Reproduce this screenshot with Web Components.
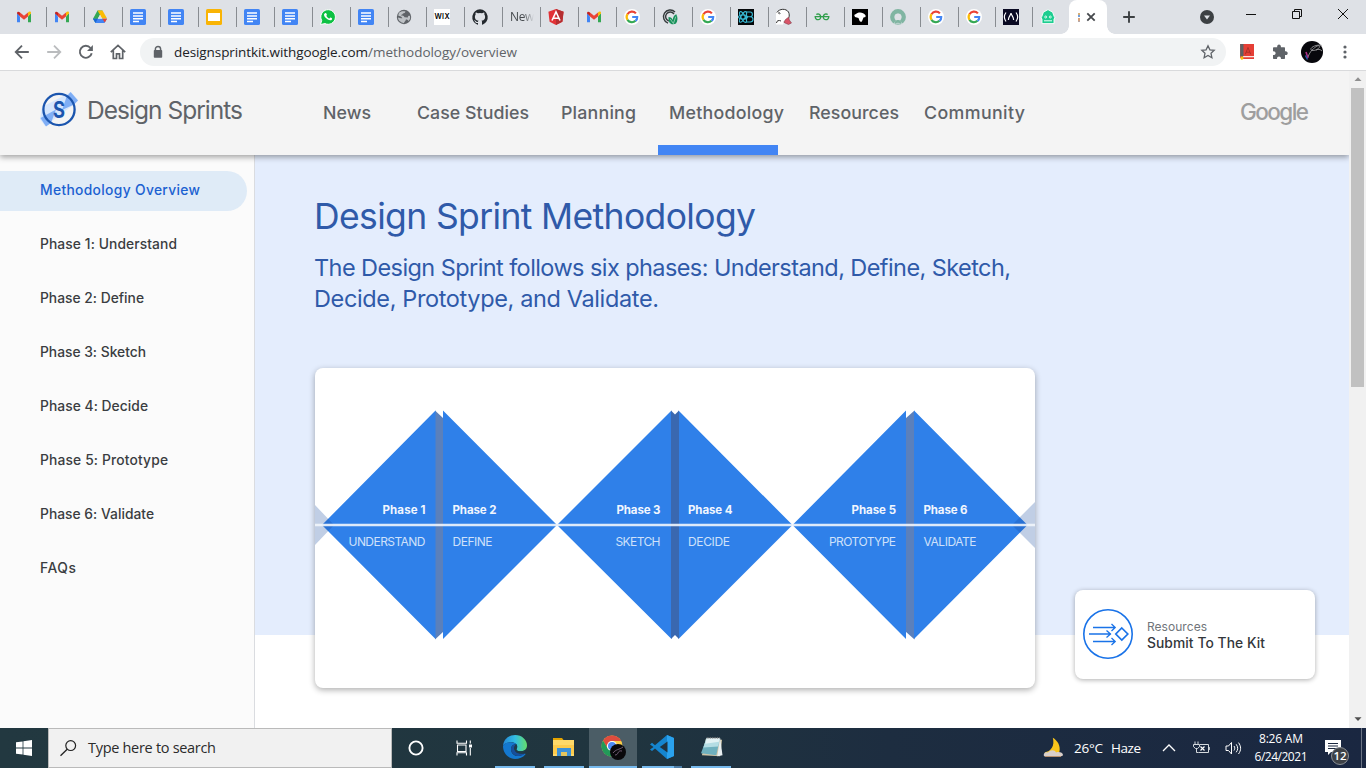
<!DOCTYPE html>
<html lang="en">
<head>
<meta charset="utf-8">
<title>Design Sprint Methodology</title>
<style>
html,body{margin:0;padding:0;height:100%;overflow:hidden;background:#fff}
body{font-family:Inter,"Open Sans",sans-serif}
</style>
</head>
<body>
<desktop-screen></desktop-screen>
<script>
const define = (name, html, setup) => {
  const t = document.createElement('template');
  customElements.define(name, class extends HTMLElement {
    connectedCallback() {
      if (this.shadowRoot) return;
      const root = this.attachShadow({mode: 'open'});
      t.innerHTML = typeof html === 'function' ? html(this) : html;
      root.appendChild(document.importNode(t.content, true));
      if (setup) setup(this);
    }
  });
};

/* Text set to an exact measure by adjusting its tracking */
define('fit-text', '<style>:host{display:inline-block;white-space:nowrap;flex:none}</style><slot></slot>', el => {
  const w = +el.getAttribute('w');
  const n = el.textContent.length - 1;
  const now = el.getBoundingClientRect().width;
  if (w && n > 0) {
    el.style.letterSpacing = ((w - now) / n).toFixed(3) + 'px';
    el.style.width = w + 'px';
  }
});

const docs = '<rect width="16" height="16" rx="1.6" fill="#4285f4"/><path d="M3 4h10M3 6.9h10M3 9.7h10M3 12.4h6" stroke="#fff" stroke-width="1.5"/>';
const icons = {
  gmail: '<path d="M1 4v9.2h3V7.6z" fill="#4285f4"/><path d="M12 7.6v5.6h3V4z" fill="#34a853"/><path d="M1 4.6L4 7.3V3.6C2.800 2 1 2.600 1 4z" fill="#c5221f"/><path d="M12 3.600v3.700l3-2.700V4c0-1.600-1.800-2-3-.4z" fill="#fbbc04"/><path d="M4 3.600L8 6.700l4-3.100v4L8 10.700 4 7.600z" fill="#ea4335"/>',
  drive: '<path d="M5.500 1.500h5L8 5.800 3.500 14 1 9.800z" fill="#34a853"/><path d="M5.500 1.500h5l4.500 8h-5z" fill="#fbbc04"/><path d="M1 9.800h14l-2.500 4.300h-9z" fill="#4285f4"/><path d="M8 5.800l2.200 4H5.800z" fill="#dee1e6"/><path d="M10.300 9.800H15l-2.200 3.800z" fill="#ea4335"/><path d="M1 9.800h4.800l-2.300 4z" fill="#1967d2"/>',
  docs,
  slides: '<rect width="16" height="16" rx="1.600" fill="#f9b405"/><rect x="2" y="4" width="12" height="8" fill="#fff"/>',
  whatsapp: '<path d="M.5 15.500l1.200-4A7.300 7.300 0 1 1 5 14.600z" fill="#0dc143" stroke="#fff"/><path d="M5 4.200c1-.8 1.500.3 1.900 1.500.1.500-.8 1-.5 1.400 1 1.700 1.900 2.100 2.700 2.400.6.200.9-1.200 1.500-1 1.800.8 1.700 1 1.300 1.900-.8 1.300-2.400 1-4.100.1C5.600 9.200 4 7.200 4 5.800c0-.7.500-1.300 1-1.600z" fill="#fff"/>',
  globe: '<circle cx="8" cy="8" r="7.200" fill="#5f6368"/><path d="M3 3.800c1.500-1.800 4.700-2 6.500-1.200-.2 1.400-1.500 1.700-2.500 2-.3 1.200-2 1-2 2 1.500 0 3 0 3.500 1.600l3.300.2c0-1.400 1-2 2.200-1.400.5 2-.3 4-1.500 5.100-.3-1-1-1.600-2.600-1.600-.2 1.400-1.400 2-2 3.700C4.800 13.700 2 11.500 2 8.600l3 .6c.8 0 1.300.5 1.300-.3C5.300 7 3.500 7 2.200 6.400z" fill="#dee1e6" opacity=".75"/>',
  wix: '<rect width="16" height="16" fill="#fff"/><text x=".4" y="10.400" font-family="Inter" font-weight="600" font-size="7.200" textLength="15.200">WIX</text>',
  github: '<path fill="#24292e" d="M8 .2a8 8 0 0 0-2.500 15.500c.4.100.5-.2.500-.4v-1.400c-2.200.5-2.700-1-2.700-1-.4-.9-.9-1.200-.9-1.200-.7-.5.100-.5.100-.5.800.1 1.200.8 1.200.8.700 1.300 1.900.9 2.300.7.100-.5.300-.9.500-1.100-1.800-.2-3.600-.9-3.600-3.900 0-.9.300-1.600.8-2.100-.1-.2-.4-1 .1-2.100 0 0 .7-.2 2.200.8a7.600 7.600 0 0 1 4 0c1.500-1 2.200-.8 2.200-.8.400 1.100.2 1.900.1 2.100.5.600.8 1.300.8 2.100 0 3.100-1.900 3.700-3.600 3.900.3.300.5.800.5 1.500v2.200c0 .2.100.5.500.4A8 8 0 0 0 8 .2z"/>',
  angular: '<path d="M8 0l7.600 2.700-1.200 10L8 16l-6.400-3.300L.4 2.700z" fill="#e23237"/><path d="M8 0l7.600 2.700-1.200 10L8 16z" fill="#b52e31"/><path d="M4 11.500L8 3l4 8.500M5.600 9.200h4.800" fill="none" stroke="#fff" stroke-width="1.600"/>',
  google: '<circle cx="8" cy="8" r="8" fill="#fff"/><g fill="none" stroke-width="2.200"><path d="M3.500 5.200A5.200 5.200 0 0 1 11.900 4.400" stroke="#ea4335"/><path d="M3.500 5.200a5.200 5.200 0 0 0 0 5.600" stroke="#fbbc05"/><path d="M3.500 10.800a5.200 5.200 0 0 0 8 1" stroke="#34a853"/><path d="M8.200 8h5c.1 1.800-.7 3.100-1.700 3.900" stroke="#4285f4"/></g>',
  leaf: '<g fill="none" stroke="#353b3d" stroke-width="1.400"><path d="M13 2.900A6.800 6.800 0 1 0 6 14.200"/><path d="M12 5A4.600 4.600 0 1 0 6.800 12"/></g><path d="M6.500 8c2.200 0 3.600 1.200 4.200 3 .3-3 1.600-5 3.600-5.800 1.700 3.200 1.500 6.700-.3 9.300-2.700 1.600-6 .8-7-2-.4-1.300-.6-3.100-.5-4.500z" fill="#16905a"/><path d="M8.200 10l3.200 4.500M13.800 7.500l-2.400 7" stroke="#b7e0ca" stroke-width=".7"/>',
  reactb: '<rect width="16" height="16" fill="#05080a"/><g fill="none" stroke="#39b9d4" stroke-width="1.100"><path d="M8.500 3h3.800c2.800.3 2.800 4.500 0 4.700 3.600 0 3.600 5.300 0 5.300H8.500zM8.500 7.700h4"/><ellipse cx="5" cy="8" rx="4.500" ry="2"/><ellipse cx="5" cy="8" rx="6" ry="2.100" transform="rotate(60 5 8)"/><ellipse cx="5" cy="8" rx="6" ry="2.100" transform="rotate(-60 5 8)"/></g>',
  duck: '<path d="M0 2.500v13h7l2-5z" fill="#fff"/><path d="M2 2C5-.5 10 0 12 2.500c2 2 1.500 5 1 6.500l-3 2-6 2C0 9 0 5 2 2z" fill="#fff"/><path d="M.8 3.500C3.500-.5 10-.8 12.500 3c1 2 .8 4 .5 5.500M2 4.500c1.500-2 3 .5 1.500.5M5 12c-2-1-4.500-.5-4.500 2" fill="none" stroke="#333" stroke-width="1"/><path d="M9.500 10.500l3.300-2.500.5 3 2.200 3-3 1.500C11 15 9 14 7.800 13.200z" fill="#d95468" stroke="#6e3540" stroke-width=".5"/>',
  gfg: '<g fill="none" stroke="#2f9e4b" stroke-width="1.300"><path d="M2.300 5.500C4 4.400 6.200 5.100 6.700 7.500c.5 4-5.500 4.500-5.500.2h13.600c0 4.300-6 3.800-5.500-.2.500-2.400 2.700-3.100 4.400-2"/></g>',
  black: '<rect width="16" height="16" fill="#000"/><path d="M2.200 6L5.500 4c3-1 6-.3 8 2.300v1.700l-2 .5-1.600 4c-1 .6-2 .3-2.400-.7L6.500 9 3 8z" fill="#fff"/>',
  ring: '<circle cx="8" cy="8" r="5.700" fill="none" stroke="#80b5a2" stroke-width="4.400"/><circle cx="8" cy="8" r="3.300" fill="#dee1e6"/><path d="M6 11h4l3 4.500H3z" fill="#dee1e6" opacity=".6"/><path d="M5 12.500l2-1.500h2l2 1.500v2.300l-2.500-1H7l-2 1z" fill="#80b5a2"/>',
  fcc: '<rect width="16" height="16" fill="#0a0a23"/><g fill="none" stroke="#fff" stroke-width="1.200"><path d="M3 3.500c-2.200 3-2.200 6 0 9M13 3.500c2.200 3 2.200 6 0 9M5.500 11C5 8 7.500 7 8 4c.5 3 3 4 2.500 7"/></g>',
  mint: '<path d="M8 .6l4.600 2.600 1.600 4.300.9 1.500-1.100.8v4.800H2V9.800L.9 9l.9-1.500 1.600-4.300z" fill="#1dcd90" stroke="#fff" stroke-width=".9"/><circle cx="5.700" cy="8" r="1" fill="none" stroke="#fff" stroke-width=".8"/><circle cx="10.300" cy="8" r="1" fill="none" stroke="#fff" stroke-width=".8"/><path d="M4 11.800h8" stroke="#e9fff7"/>',
  back: '<path d="M14.800 8H2M8 1.700L1.700 8 8 14.300" fill="none" stroke="#5f6368" stroke-width="1.800"/>',
  forward: '<path d="M1.200 8H14M8 1.700L14.300 8 8 14.300" fill="none" stroke="#babcbe" stroke-width="1.800"/>',
  reload: '<path d="M13.700 9.200A6 6 0 1 1 12.500 4" fill="none" stroke="#5f6368" stroke-width="1.900"/><path d="M14.900 1v6H9z" fill="#5f6368"/>',
  home: '<path d="M.8 8.200L8 1.400l7.200 6.800M3.300 6.500v8h3.200V9.800h3v4.700h3.200v-8" fill="none" stroke="#5f6368" stroke-width="1.700"/>',
  lock: '<path d="M5.400 6.500V5a2.600 2.600 0 0 1 5.200 0v1.500" fill="none" stroke="#5f6368" stroke-width="1.500"/><rect x="3.800" y="6" width="8.400" height="7.800" rx=".8" fill="#5f6368"/>',
  star: '<path d="M8 1.800l1.900 4 4.300.5-3.200 3 .9 4.400L8 11.500l-3.900 2.200.9-4.400-3.200-3 4.300-.5z" fill="none" stroke="#5f6368" stroke-width="1.300"/>',
  book: '<path d="M1.200 0H15v12H4v1h11v2H3l-1.800-1z" fill="#e53e35"/><path d="M1.200 0h3.300v12.500H1.200z" fill="#5d6063"/><path d="M4 12.800h10.800" stroke="#f7d8d5"/><path d="M6.300 10.300L9 3.500l2.700 6.800M7.300 8.200h3.500" fill="none" stroke="#a93129" stroke-width="1"/><path d="M2 12.600h2l.5 2-1.500 1.400-1.500-1z" fill="#f4c20d"/>',
  puzzle: '<path d="M1 4.300c0-.7.500-1 1-1h3.200C4.900 1.400 6 .6 7 .6s2.200.8 1.900 2.700H12c.7 0 1 .4 1 1v3c2-.3 2.700.9 2.700 1.900S15 11.400 13 11v3.100c0 .6-.4 1-1 1H9c.1-1.800-.8-2.600-2-2.600s-2.100.8-2 2.600H2c-.6 0-1-.4-1-1v-3c1.800.1 2.600-.8 2.600-1.900S2.800 7.200 1 7.300z" fill="#5f6368"/>',
  avatar: '<circle cx="11" cy="11" r="11" fill="#07070c"/><g fill="none"><path d="M7 16c2-6 6-9 9-11 3-1 4 1 0 3.500-3 1.500-7 1.500-6-1 2-3 8-4 11-3" stroke="#a9a9ac" stroke-width=".8"/><path d="M5 11l1 3 1 3" stroke="#ad2e86" stroke-width="1.600"/><path d="M4.500 14.500l2 4" stroke="#2a56a4" stroke-width="1.500"/><path d="M15 9c2-1 4-1 6 1" stroke="#c5c5c5" stroke-width=".7"/></g>',
  dots: '<g fill="#5f6368"><circle cx="8" cy="3" r="1.600"/><circle cx="8" cy="8" r="1.600"/><circle cx="8" cy="13" r="1.600"/></g>',
  close: '<path d="M4.300 4.300l7.400 7.400M11.700 4.300l-7.400 7.400" stroke="#45484c" stroke-width="1.800"/>',
  plus: '<path d="M8 2.200v11.600M2.200 8h11.600" stroke="#3c4043" stroke-width="1.900"/>',
  chev: '<circle cx="8" cy="8" r="7" fill="#3c4043"/><path d="M5 6.400h6L8 10.500z" fill="#dee1e6"/>',
  min: '<path d="M3 8.500h10" stroke="#111"/>',
  restore: '<path d="M3.500 5.500h7v7h-7zM5.500 5.500v-2h7v7h-2" fill="none" stroke="#111"/>',
  winclose: '<path d="M3 3l10 10M13 3L3 13" stroke="#111" stroke-width="1"/>',
  up: '<path d="M4.500 10L8 6.300l3.500 3.700z" fill="#8f8f8f"/>',
  down: '<path d="M4.500 6.300L8 10l3.500-3.700z" fill="#505050"/>',
  windows: '<path d="M0 2.300l6.600-.9v6.200H0zM7.400 1.300L16 .1v7.500H7.400zM0 8.400h6.600v6.200L0 13.700zM7.400 8.400H16v7.500l-8.600-1.200z" fill="#fff"/>',
  search: '<circle cx="10.700" cy="5.600" r="4.900" fill="none" stroke="#222" stroke-width="1.200"/><path d="M7.200 9.200L.5 15.800" stroke="#222" stroke-width="1.300"/>',
  cortana: '<circle cx="8" cy="8" r="6.600" fill="none" stroke="#fff" stroke-width="1.900"/>',
  task: '<path d="M1 .5v2.700h9.500V.5M1.500 5h8.500v6.500H1.500zM1 15.500v-2.700h9.500v2.700" fill="none" stroke="#fff" stroke-width="1.100"/><path d="M14.300.5v3M14.300 8v7.500" stroke="#fff" stroke-width="1.100"/><path d="M13 4.500h3v3h-3z" fill="#fff"/>',
  edge: '<defs><linearGradient id="e"><stop stop-color="#2487d7"/><stop offset=".5" stop-color="#32bde4"/><stop offset="1" stop-color="#64dc6a"/></linearGradient></defs><path d="M0 11C.5 4.500 5.500 0 12.200 0 19 0 24 5 24 10.300c0 4-3 6-6 6-3.400 0-4.800-1.100-4.600-2.100.3-.8 1-1 .9-2.700C14.300 9 11.500 7.200 8 7.200c-3.700 0-7 1.500-8 3.800z" fill="url(#e)"/><path d="M0 11c1-2.500 4.500-3.800 8-3.800 2.500 0 4.500.8 5.500 2-3.500-.4-5.500 2-5.500 5 0 5 5 8 9.500 6.500 2-.8 3.300-1.500 4.200-1.900.8-.3 1 .3.600.8C20 22.600 16.200 24 12 24 5 24-.2 17.500 0 11z" fill="#1478cf"/><path d="M8 14.200c0-3 2-5.400 5.500-5-1.500 1-2.500 2.500-2.200 4.500.7 4 5.700 5.300 10.400 5.100-4.700 4.500-13.700 1.900-13.700-4.600z" fill="#164f9c"/><path d="M11.300 13.700c-.2-2 .8-3.500 2-4.500 1 1.500 1 3.500.1 5 .2 2 4.600 3 8.300 1.100.8-.3 1 .6.300 1.400-4 3.500-10 2-10.700-3z" fill="#203b49"/>',
  folder: '<path d="M1 3h9l1.500 2H1z" fill="#e5a400"/><path d="M1 5h21v16H1z" fill="#ffd969"/><path d="M1 10h21v9H1z" fill="#fdcb4c"/><path d="M5 21v-8h14v8h-4v-4H9v4z" fill="#3c91d8"/><path d="M9 17h6v4H9z" fill="#e4c55d"/>',
  chrome: '<circle cx="11" cy="11" r="10.500" fill="#f9cc45"/><path d="M11 .5A10.500 10.500 0 0 0 2 5.700L6.500 13 11 6h9.300A10.500 10.500 0 0 0 11 .5z" fill="#df4c3e"/><path d="M2 5.500A10.500 10.500 0 0 0 11 21.500l4.500-7-4 1.500-5-3z" fill="#229a59"/><circle cx="11" cy="11" r="5.100" fill="#fff"/><circle cx="11" cy="11" r="4" fill="#4c8bf5"/><circle cx="17" cy="17" r="8" fill="#09080b"/><path d="M12 18c3-4 6-3 10-6M14 20c4 0 2-5 7-4" fill="none" stroke="#8d7391" stroke-width=".8"/>',
  vscode: '<path d="M17 0l7 3v18l-7 3L5 13.500 2 16 0 14.500 3.500 12 0 9.500 2 7.800 5 10.300z" fill="#1585cf"/><path d="M17 0l7 3v18l-7 3V0z" fill="#2aa2ee"/><path d="M17.500 6.500v11L9.800 12z" fill="#20323e"/>',
  notepad: '<path d="M6 3l17 1-2 17L2 20z" fill="#d0c6a9"/><path d="M7 2h14l-4 18L1 18z" fill="#6fb0be"/><path d="M7 2h14l-2 9L3.500 12z" fill="#b5dde4"/><path d="M7 2h14l-1.200 4L5.500 8z" fill="#e3f2f4"/><path d="M21 2l2.500 18-5.500 1z" fill="#e7eef0"/><path d="M7 2h14" stroke="#888" stroke-width="1.500" stroke-dasharray="1 .8"/>',
  moon: '<path d="M10.800.8c4.500 2.600 7.900 7.800 6.700 13.700-2.500 4-10 4.300-15 1C9 14.500 13 9 10.800.8z" fill="#f9c51b"/><path d="M2 19c-1-3 2-4.500 4-3.500 2-3 7-3 8 0 3-1 7 0 7 2.500s-18 2.500-19 1z" fill="#d9cfca"/><path d="M3 19.500h16" stroke="#b68f6e"/>',
  caret: '<path d="M2 11l6-6 6 6" fill="none" stroke="#fff" stroke-width="1.300"/>',
  battery: '<path d="M7 4.500h8.500v8H5.500M16.300 7v3M2 1.500v3M5 1.500v3M.5 4.500h6v2.200L4.500 8.500h-2L.5 6.700zM3.500 8.500v4h2" fill="none" stroke="#d5dade" stroke-width="1"/><path d="M7.500 6.500l4 4M11.500 6.500l-4 4" stroke="#fff" stroke-width="1.200"/>',
  speaker: '<path d="M1 6v4.500h2.500L6.500 14V2.500L3.500 6zM9 6c1 1.500 1 3 0 4.500M11.200 4.300c2 2.700 2 5.300 0 8M13.500 2.600c2.800 3.800 2.800 7.600 0 11.400" fill="none" stroke="#fff" stroke-width="1"/>',
  note: '<path d="M0 0h16v12H6l-3 3v-3H0z" fill="#fff"/><path d="M3 3.500h10M3 6h10M3 8.500h10" stroke="#1c2940" stroke-width="1"/>',
  kit: '<g fill="none" stroke="#1a73e8" stroke-width="1.300"><circle cx="25" cy="25" r="24.200" stroke-width="1.600"/><path d="M10 18.500h22M6 25h22M10 32.500h22M28.500 15l3.700 3.500-3.700 3.500M23.500 21.500l4 3.500-4 3.500M28.500 29l3.700 3.500-3.700 3.500"/><path d="M38.800 19l6 6-6 6-6-6z" stroke-width="1.700"/></g>',
  sprint: '<path d="M31 0l7 8-5.500 5.500L5 34 0 27 2 15z" fill="#d5e6fd"/><path d="M30.500 0l7.500 8.500-4 4L22 18l4.500-13zM.500 26L16 17.500 11 31l-5 3.500z" fill="#7faef5"/><circle cx="19" cy="17.500" r="15.600" fill="none" stroke="#1b55ae" stroke-width="2.300"/><text x="13" y="25.500" font-family="Inter" font-weight="700" font-size="22.500" fill="#1b55ae" textLength="12" lengthAdjust="spacingAndGlyphs">S</text>'
};
define('ui-icon', el => {
  const s = +el.getAttribute('s') || 16, b = el.getAttribute('box') || 16, [bw, bh] = (b + ' ' + b).split(' ');
  return `<style>:host{display:block;flex:none;width:${s}px}svg{display:block;overflow:visible}</style><svg width="${s}" height="${s * bh / bw}" viewBox="0 0 ${bw} ${bh}">${icons[el.getAttribute('name')]}</svg>`;
});

const tabs = 'gmail gmail drive docs docs slides docs docs whatsapp docs globe wix github news angular gmail google leaf google reactb duck gfg black ring google google fcc mint'.split(' ');
define('tab-strip', `<style>
:host{display:flex;height:34px;background:#dee1e6;padding-left:9px;box-sizing:border-box;font:12px "Open Sans",sans-serif}
.tab{width:38px;height:34px;box-sizing:border-box;padding:9px 0 0 7px;flex:none;background:linear-gradient(#888c91,#888c91) right 7px/1px 20px no-repeat;background-position:right 0 top 7px}
.n{width:37px}.last{width:36px;background:none}
.news{display:block;width:26px;color:#45494d;line-height:16px;letter-spacing:-.4px;-webkit-mask:linear-gradient(90deg,#000 50%,transparent 92%)}
.active{width:38px;height:34px;background:#fff;border-radius:8px 8px 0 0;display:flex;align-items:center;padding-left:9px;box-sizing:border-box;position:relative;flex:none}
.active:before,.active:after{content:"";position:absolute;bottom:0;width:8px;height:8px;left:-8px;background:radial-gradient(circle at 0 0,transparent 7.500px,#fff 8px)}
.active:after{left:38px;background:radial-gradient(circle at 100% 0,transparent 7.500px,#fff 8px)}
.bit{width:2px;height:9px;margin-right:3px;background:linear-gradient(#d8b078 20%,#6f9fdd 20% 40%,#fff 40% 60%,#d8a47a 60% 80%,#aab)}
.plus{margin:9px 0 0 14px}.chev{margin:9px 0 0 62px}.w1{margin:6px 0 0 28px}.w{margin:6px 0 0 30px}
</style>${tabs.map((t, i) => `<div class="tab ${i > 24 ? 'n' : ''} ${i === 27 ? 'last' : ''}">${t === 'news' ? '<span class="news">New</span>' : `<ui-icon name="${t}"></ui-icon>`}</div>`).join('')}
<div class="active"><span class="bit"></span><ui-icon name="close"></ui-icon></div>
<ui-icon class="plus" name="plus"></ui-icon><ui-icon class="chev" name="chev"></ui-icon>
<ui-icon class="w1" name="min"></ui-icon><ui-icon class="w" name="restore"></ui-icon><ui-icon class="w" name="winclose"></ui-icon>`);

define('address-bar', `<style>
:host{display:flex;align-items:center;height:37px;box-sizing:border-box;padding:0 13px 1px 14px;background:#fff;border-bottom:1px solid #d9dadc;font:13.500px/20px "Open Sans",sans-serif;color:#202124}
.nav{display:flex;gap:16px;width:126px;flex:none}
.box{display:flex;align-items:center;width:1086px;flex:none;height:28px;border-radius:14px;background:#f1f3f4;padding:0 10px;box-sizing:border-box}
.url{margin-left:8px;display:flex;flex:1}.path{color:#5f6368}
.a{margin-left:13px}.b{margin-left:17px}.c{margin-left:13px}.d{margin-left:14px}
</style><div class="nav"><ui-icon name="back"></ui-icon><ui-icon name="forward"></ui-icon><ui-icon name="reload"></ui-icon><ui-icon name="home"></ui-icon></div>
<div class="box"><ui-icon name="lock"></ui-icon><div class="url"><fit-text w="194">designsprintkit.withgoogle.com</fit-text><fit-text class="path" w="149">/methodology/overview</fit-text></div><ui-icon name="star"></ui-icon></div>
<ui-icon class="a" name="book"></ui-icon><ui-icon class="b" name="puzzle"></ui-icon><ui-icon class="c" name="avatar" s="22" box="22"></ui-icon><ui-icon class="d" name="dots"></ui-icon>`);

define('site-header', `<style>
:host{display:flex;height:84px;background:#f4f4f4;box-shadow:0 2px 6px rgba(0,0,0,.38);position:relative;z-index:2;color:#5f6368}
ui-icon{margin:21px 9px 0 40px}
.brand{font-size:24.500px;line-height:30px;margin-top:24px;font-weight:400;width:236px}
nav{display:flex;font-size:17.800px;font-weight:500;line-height:24px;padding-top:30px;box-sizing:border-box;height:84px}
nav>*{margin-right:var(--g)}
.on{position:relative}.on:after{content:"";position:absolute;left:-11px;top:44px;width:120px;height:10px;background:#4285f4}
.g{margin:26px 0 0 215px;font-size:22.500px;line-height:30px;color:#9e9e9e;font-weight:500;height:30px}
</style><ui-icon name="sprint" s="38" box="38 36"></ui-icon><div class="brand"><fit-text w="156">Design Sprints</fit-text></div>
<nav><fit-text w="48" style="--g:46px">News</fit-text><fit-text w="112" style="--g:32px">Case Studies</fit-text><fit-text w="75" style="--g:33px">Planning</fit-text><fit-text class="on" w="115" style="--g:25px">Methodology</fit-text><fit-text w="90" style="--g:25px">Resources</fit-text><fit-text w="101" style="--g:0">Community</fit-text></nav>
<fit-text class="g" w="69">Google</fit-text>`);

const side = [['Methodology Overview',160],['Phase 1: Understand',137],['Phase 2: Define',104],['Phase 3: Sketch',106],['Phase 4: Decide',108],['Phase 5: Prototype',128],['Phase 6: Validate',114],['FAQs',36]];
define('side-nav', `<style>
:host{display:flex;flex-direction:column;gap:14px;width:254px;flex:none;border-right:1px solid #dadce0;background:#fbfbfb;padding-top:16px;box-sizing:content-box;font-size:13.800px;font-weight:500;color:#3a3d41}
a{display:flex;align-items:center;height:40px;padding-left:40px;width:207px;border-radius:0 20px 20px 0;line-height:18px}
a.on{background:#dfebf7;color:#1b61d1}fit-text{margin-top:-2px}
</style>${side.map(([t, w], i) => `<a class="${i ? '' : 'on'}"><fit-text w="${w}">${t}</fit-text></a>`).join('')}`);

const label = (x, y, w, s, end, b) => `<text x="${end ? x - w : x}" y="${y}" textLength="${w}" class="${b ? 'b' : 'l'}">${s}</text>`;
define('phase-diagram', `<style>
:host{display:block;width:720px;height:320px;border-radius:8px;background:#fff;box-shadow:0 2px 6px rgba(0,0,0,.32);overflow:hidden}
svg{display:block}text{font-family:Inter,sans-serif}.b{font-size:11.500px;font-weight:700;fill:#f1f6fe}.l{font-size:12px;fill:#cfe1fa}
</style><svg width="720" height="320" viewBox="0 0 720 320">
<path d="M120 42.500l8.500 8v213l-8.500 8zM599.500 42.500l-9 8v213l9 8z" fill="#5b80bb"/>
<g fill="#2f80e9"><path d="M7 157L120.500 42.500v228.500zM128 42.500v228.500L242 157z"/><path d="M242 157L356.500 42.500v228.500zM363.500 42.500v228.500L477.500 157z"/><path d="M477.500 157L591 42.500v228.500zM599 42.500v228.500L712.500 157z"/></g>
<path d="M356 42.500l4 4 4-4v228.500l-4-4-4 4z" fill="#3a68b0"/>
<path d="M0 137l19 20-19 20zM720 134l-23 23 23 23z" fill="#174b9f" opacity=".27"/>
<path d="M0 157h720" stroke="#f2f6fc" stroke-width="2.400" opacity=".9"/>
${label(110.5,146,43,'Phase 1',1,1)}${label(110.5,178,77,'UNDERSTAND',1)}${label(137.5,146,44,'Phase 2',0,1)}${label(137.5,178,40,'DEFINE')}
${label(345.5,146,44,'Phase 3',1,1)}${label(345.5,178,45,'SKETCH',1)}${label(373,146,44.500,'Phase 4',0,1)}${label(373,178,42,'DECIDE')}
${label(581,146,44.500,'Phase 5',1,1)}${label(581,178,67,'PROTOTYPE',1)}${label(608.5,146,44,'Phase 6',0,1)}${label(608.5,178,53,'VALIDATE')}
</svg>`);

define('resource-card', `<style>
:host{display:flex;align-items:center;width:240px;height:89px;border-radius:8px;background:#fff;box-shadow:0 1px 5px rgba(0,0,0,.32);padding-left:8px;box-sizing:border-box}
ui-icon{margin-top:-2px}
div{display:flex;flex-direction:column;align-items:flex-start;margin-left:14px;line-height:17px}
.t{font-size:12px;color:#70757a}.n{font-size:13.800px;font-weight:500;color:#33373b}
</style><ui-icon name="kit" s="50" box="50"></ui-icon><div><fit-text class="t" w="60">Resources</fit-text><fit-text class="n" w="118">Submit To The Kit</fit-text></div>`);

define('main-content', `<style>
:host{display:flex;flex:1;background:linear-gradient(#e4edfd 480px,#fff 480px);padding:40px 34px 0 60px;box-sizing:border-box;height:573px;color:#2f5aa9}
.col{width:720px;display:flex;flex-direction:column}
h1{font-size:35.500px;font-weight:400;line-height:44px;margin:0 0 0 -1px}
p{font-size:23.500px;line-height:31px;margin:13px 0 54px -1px;display:flex;flex-direction:column;align-items:flex-start}
resource-card{margin:395px 0 0 40px}
</style><div class="col"><h1><fit-text w="442">Design Sprint Methodology</fit-text></h1>
<p><fit-text w="697">The Design Sprint follows six phases: Understand, Define, Sketch,</fit-text><fit-text w="345">Decide, Prototype, and Validate.</fit-text></p><phase-diagram></phase-diagram></div><resource-card></resource-card>`);

define('scroll-bar', `<style>:host{display:flex;flex-direction:column;width:17px;height:657px;background:#f1f1f1;align-items:center}
i{display:block;width:13px;height:299px;background:#c1c1c1}ui-icon{height:17px}.d{margin-top:auto}</style><ui-icon name="up"></ui-icon><i></i><ui-icon class="d" name="down"></ui-icon>`);

define('task-bar', `<style>
:host{display:flex;height:40px;background:linear-gradient(90deg,#223840,#20353f 45%,#1d2d40 65%,#1a2741);color:#fff;font-family:"Open Sans",sans-serif}
.start{width:48px;padding:12px 16px;box-sizing:border-box}
.search{display:flex;align-items:center;width:344px;box-sizing:border-box;background:#f1f1f1;border:1px solid #bababa;padding-left:11px;color:#2b2b2b;font-size:14.500px;line-height:20px}
.search fit-text{margin-left:12px}
.app{width:48px;height:40px;display:flex;align-items:center;justify-content:center;box-sizing:border-box;flex:none}
.run{width:40px;margin-left:9px;border-bottom:2px solid #76b9ed}
.cur{width:48px;margin-left:5px;background:#4b5d66;border-bottom:2px solid #76b9ed}
.cur+.run{margin-left:5px;border-image:linear-gradient(90deg,#76b9ed 78%,#4f7fa8 78%) 2}
.tray{margin-left:auto;display:flex;align-items:center;font-size:13.500px}
.clock{display:flex;flex-direction:column;align-items:center;font-size:12px;line-height:18px;width:54px;margin-left:13px}
.n{position:relative;margin-left:17px}
.badge{position:absolute;left:6px;top:-1px;width:18px;height:18px;border-radius:50%;background:#3d4146;border:1px solid #8a8f95;font-size:11.500px;font-weight:600;line-height:16px;text-align:center;box-sizing:border-box;margin-top:8px}
.end{width:1px;height:40px;background:#6b7484;margin-left:20px;margin-right:4px}
</style>
<div class="start"><ui-icon name="windows"></ui-icon></div>
<div class="search"><ui-icon name="search"></ui-icon><fit-text w="128">Type here to search</fit-text></div>
<div class="app"><ui-icon name="cortana"></ui-icon></div><div class="app" style="width:47px"><ui-icon name="task"></ui-icon></div>
<div class="app run" style="margin-left:8px"><ui-icon name="edge" s="24" box="24"></ui-icon></div><div class="app run"><ui-icon name="folder" s="24" box="24"></ui-icon></div><div class="app cur"><ui-icon name="chrome" s="24" box="24"></ui-icon></div><div class="app run"><ui-icon name="vscode" s="24" box="24"></ui-icon></div><div class="app run"><ui-icon name="notepad" s="23" box="24"></ui-icon></div>
<div class="tray"><ui-icon name="moon" s="22" box="22"></ui-icon><fit-text w="29" style="margin-left:10px">26°C</fit-text><fit-text w="30" style="margin-left:8px">Haze</fit-text>
<ui-icon name="caret" style="margin-left:20px"></ui-icon><ui-icon name="battery" style="margin-left:16px"></ui-icon><ui-icon name="speaker" style="margin-left:16px"></ui-icon>
<div class="clock"><fit-text w="44">8:26 AM</fit-text><fit-text w="53">6/24/2021</fit-text></div>
<div class="n"><ui-icon name="note"></ui-icon><span class="badge">12</span></div><div class="end"></div></div>`);

define('desktop-screen', `<style>
:host{display:flex;flex-direction:column;width:1366px;height:768px;overflow:hidden}
.view{display:flex;height:657px}.page{width:1349px;height:657px;overflow:hidden}.body{display:flex;height:573px}
</style><tab-strip></tab-strip><address-bar></address-bar>
<div class="view"><div class="page"><site-header></site-header><div class="body"><side-nav></side-nav><main-content></main-content></div></div><scroll-bar></scroll-bar></div>
<task-bar></task-bar>`);
</script>
</body>
</html>
